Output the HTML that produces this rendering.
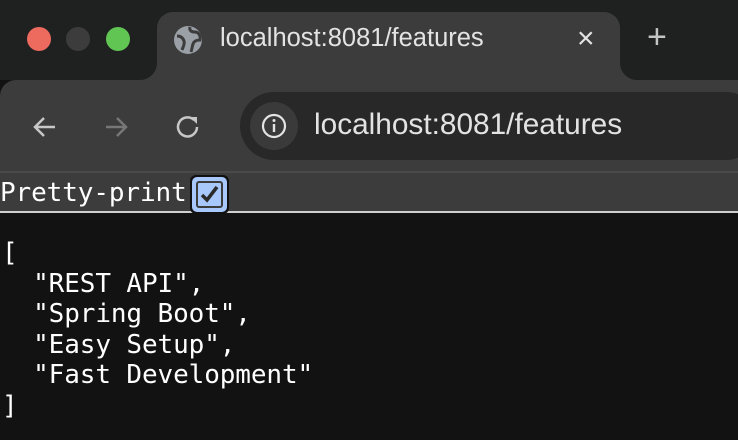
<!DOCTYPE html>
<html><head><style>
*{margin:0;padding:0;box-sizing:border-box}
body{width:738px;height:440px;background:#121212;overflow:hidden;position:relative;font-family:"Liberation Sans",sans-serif}
.abs{position:absolute}
.mono{font-family:"DejaVu Sans Mono","Liberation Mono",monospace;font-size:26px;color:#fff}
</style></head><body>
<div class="abs" style="left:0;top:0;width:738px;height:80px;background:#1f2020"></div>
<!-- tab -->
<div class="abs" style="left:157px;top:12px;width:463px;height:70px;background:#3c3c3c;border-radius:16px 16px 0 0"></div>
<div class="abs" style="left:140px;top:63px;width:17px;height:17px;background:#3c3c3c"></div>
<div class="abs" style="left:140px;top:63px;width:17px;height:17px;background:#1f2020;border-radius:0 0 17px 0"></div>
<div class="abs" style="left:620px;top:63px;width:17px;height:17px;background:#3c3c3c"></div>
<div class="abs" style="left:620px;top:63px;width:17px;height:17px;background:#1f2020;border-radius:0 0 0 17px"></div>
<div class="abs" style="left:27px;top:27px;width:24px;height:24px;border-radius:50%;background:#ed6a5e"></div>
<div class="abs" style="left:66px;top:27px;width:24px;height:24px;border-radius:50%;background:#3c3c3c"></div>
<div class="abs" style="left:106px;top:27px;width:24px;height:24px;border-radius:50%;background:#61c554"></div>
<svg class="abs" style="left:173px;top:25px" width="30" height="30" viewBox="0 0 30 30"><circle cx="15" cy="15" r="14" fill="#9aa0a6"/><path d="M4 11c4 0 6 2 7 5s-1 6-2 9M17 2c-1 4 2 5 5 5s6 3 5 8c-3 0-6 1-7 4s-1 5-2 8" stroke="#3c3c3c" stroke-width="3" fill="none"/></svg>
<div class="abs" style="left:220px;top:24px;font-size:25.5px;color:#e3e3e3">localhost:8081/features</div>
<div class="abs" style="left:577px;top:22px;font-size:30px;color:#e3e3e3">×</div>
<div class="abs" style="left:647px;top:18px;font-size:34px;color:#c4c4c4;font-weight:300">+</div>
<!-- toolbar -->
<div class="abs" style="left:0;top:80px;width:738px;height:92px;background:#3c3c3c;border-radius:16px 0 0 0"></div>
<svg class="abs" style="left:30px;top:112px" width="30" height="30" viewBox="0 0 30 30"><path d="M25 15H5M14 6l-9 9 9 9" stroke="#c7c7c7" stroke-width="2.5" fill="none"/></svg>
<svg class="abs" style="left:101px;top:112px" width="30" height="30" viewBox="0 0 30 30"><path d="M5 15h20M16 6l9 9-9 9" stroke="#777" stroke-width="2.5" fill="none"/></svg>
<svg class="abs" style="left:173px;top:112px" width="30" height="30" viewBox="0 0 30 30"><path d="M24 15a9.5 9.5 0 1 1-3-7" stroke="#c7c7c7" stroke-width="2.5" fill="none"/><path d="M17 5h7v7z" fill="#c7c7c7"/></svg>
<div class="abs" style="left:240px;top:92px;width:520px;height:68px;background:#282828;border-radius:34px"></div>
<div class="abs" style="left:250px;top:102px;width:48px;height:48px;background:#3a3a3a;border-radius:50%"></div>
<svg class="abs" style="left:261px;top:113px" width="26" height="26" viewBox="0 0 26 26"><circle cx="13" cy="13" r="11" stroke="#e3e3e3" stroke-width="2.2" fill="none"/><path d="M13 11v8" stroke="#e3e3e3" stroke-width="2.4"/><circle cx="13" cy="7.5" r="1.5" fill="#e3e3e3"/></svg>
<div class="abs" style="left:314px;top:108px;font-size:29.8px;color:#e3e3e3">localhost:8081/features</div>
<div class="abs" style="left:0;top:171px;width:738px;height:2px;background:#4a4a4a"></div>
<!-- pretty print bar -->
<div class="abs" style="left:0;top:173px;width:738px;height:38px;background:#3c3c3c"></div>
<div class="abs" style="left:0;top:211px;width:738px;height:2px;background:#cfcfcf"></div>
<div class="abs mono" style="left:0;top:177px;line-height:32px;letter-spacing:-0.1px">Pretty-print</div>
<div class="abs" style="left:190px;top:175px;width:39px;height:39px;background:#111;border-radius:6px"></div>
<div class="abs" style="left:192px;top:177px;width:35px;height:35px;background:#a8c7fa;border-radius:5px"></div>
<div class="abs" style="left:196px;top:181px;width:27px;height:27px;border:2.5px solid #3c3c3c;border-radius:3px"></div>
<svg class="abs" style="left:196px;top:181px" width="27" height="27" viewBox="0 0 27 27"><path d="M6 14l5 5 10-13" stroke="#2a2a2a" stroke-width="3.5" fill="none"/></svg>
<pre class="abs mono" style="left:2px;top:238px;line-height:30.6px;letter-spacing:-0.1px">[
  "REST API",
  "Spring Boot",
  "Easy Setup",
  "Fast Development"
]</pre>
</body></html>
